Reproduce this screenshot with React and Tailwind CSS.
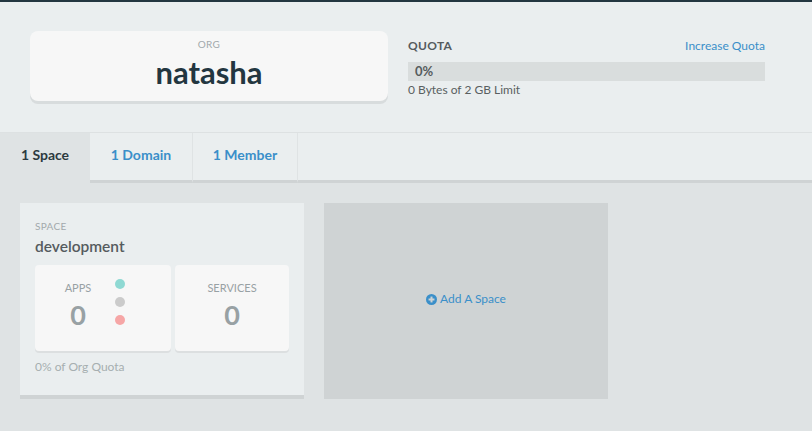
import React from 'react';

const tabs = [
  { label: '1 Space', active: true, width: 'w-[90px]' },
  { label: '1 Domain', active: false, width: 'w-[103px]' },
  { label: '1 Member', active: false, width: 'w-[105px]' },
];

const StatusDots = () => (
  <div className="flex flex-col gap-[8px] -mt-[2px]">
    <span className="w-[10px] h-[10px] rounded-full bg-[#8fd9d3]" />
    <span className="w-[10px] h-[10px] rounded-full bg-[#cbcbcb]" />
    <span className="w-[10px] h-[10px] rounded-full bg-[#f6a6a6]" />
  </div>
);

const App = () => {
  return (
    <div className="min-h-screen bg-[#dfe3e4] font-['Lato',sans-serif]">
      <div className="h-[2px] bg-[#233640]" />

      {/* Org header */}
      <div className="flex bg-[#eaeeef] pt-[29px] pb-[31px] pl-[30px] border-b border-[#dde1e2]">
        <div className="w-[358px] h-[70px] rounded-[8px] bg-[#f7f7f7] shadow-[0_3px_0_#d8dcdd] flex flex-col items-center pt-[7px]">
          <span className="text-[10px] tracking-[0.3px] text-[#a2a9ac] leading-[12px]">ORG</span>
          <span className="text-[31px] font-bold text-[#233640] leading-[36px] mt-[4px]">natasha</span>
        </div>
        <div className="w-[357px] ml-[20px] pt-[6px]">
          <div className="flex justify-between items-center">
            <span className="text-[12px] font-bold text-[#555b5e] tracking-[0.3px]">QUOTA</span>
            <a className="text-[12px] text-[#3a8fc9]">Increase Quota</a>
          </div>
          <div className="mt-[7px] h-[19px] bg-[#d9dddd] flex items-center pl-[7px]">
            <span className="text-[13px] font-bold text-[#565c5e]">0%</span>
          </div>
          <div className="text-[12px] text-[#595f61] leading-[16px] mt-[1px]">0 Bytes of 2 GB Limit</div>
        </div>
      </div>

      {/* Tabs */}
      <div className="flex bg-[#eaeeef] h-[50px]">
        {tabs.map((tab) => (
          <div
            key={tab.label}
            className={`${tab.width} flex items-center justify-center text-[14px] font-bold ${
              tab.active
                ? 'bg-[#dfe3e4] text-[#2c3a40] pb-[8px]'
                : 'text-[#3a8fc9] pb-[5px] border-r border-[#dfe3e4] border-b-[3px] border-b-[#cfd3d4]'
            }`}
          >
            {tab.label}
          </div>
        ))}
        <div className="flex-1 border-b-[3px] border-[#cfd3d4]" />
      </div>

      {/* Spaces */}
      <div className="flex gap-[20px] px-[20px] pt-[20px]">
        <div className="w-[284px] h-[196px] bg-[#eaeeef] border-b-[4px] border-[#cfd3d4] px-[15px] pt-[17px]">
          <div className="text-[10px] text-[#a2a9ac] tracking-[0.3px] leading-[12px]">SPACE</div>
          <div className="text-[15.5px] font-semibold text-[#555b5e] leading-[20px] mt-[4px]">development</div>
          <div className="flex gap-[4px] mt-[9px]">
            <div className="w-[136px] h-[86px] bg-[#f7f7f7] rounded-[4px] shadow-[0_2px_0_#dcdfe0] flex items-start gap-[12px] pt-[16px] pl-[18px]">
              <div className="w-[50px] flex flex-col items-center">
                <span className="text-[11px] text-[#98a1a4] leading-[14px]">APPS</span>
                <span className="text-[27px] font-bold text-[#98a1a4] leading-[30px] mt-[5px]">0</span>
              </div>
              <StatusDots />
            </div>
            <div className="w-[114px] h-[86px] bg-[#f7f7f7] rounded-[4px] shadow-[0_2px_0_#dcdfe0] flex flex-col items-center pt-[16px]">
              <span className="text-[11px] text-[#98a1a4] leading-[14px]">SERVICES</span>
              <span className="text-[27px] font-bold text-[#98a1a4] leading-[30px] mt-[5px]">0</span>
            </div>
          </div>
          <div className="text-[12px] text-[#a6aeb0] mt-[7px]">0% of Org Quota</div>
        </div>

        <div className="w-[284px] h-[196px] bg-[#cfd3d4] flex items-center justify-center gap-[3px] pb-[4px]">
          <svg width="11" height="11" viewBox="0 0 12 12">
            <circle cx="6" cy="6" r="6" fill="#3a8fc9" />
            <rect x="2.8" y="4.9" width="6.4" height="2.2" fill="#cfd3d4" />
            <rect x="4.9" y="2.8" width="2.2" height="6.4" fill="#cfd3d4" />
          </svg>
          <span className="text-[12px] text-[#3a8fc9]">Add A Space</span>
        </div>
      </div>
    </div>
  );
};

export default App;
